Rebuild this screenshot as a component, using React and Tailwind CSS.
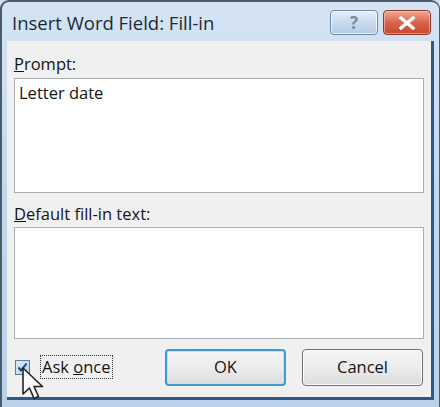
import React from "react";

const font = { fontFamily: '"Open Sans", "Noto Sans", sans-serif' };

function HelpButton() {
  return (
    <div className="flex h-[25px] w-[48px] items-center justify-center rounded-[4px] border border-[#6f8aa8] bg-gradient-to-b from-[#e3eef9] via-[#c8dbef] to-[#b3cce6] shadow-[inset_0_0_0_1px_rgba(255,255,255,0.7)]">
      <span className="text-[17px] font-bold leading-none text-[#7c8a99]">?</span>
    </div>
  );
}

function CloseButton() {
  return (
    <div className="flex h-[25px] w-[48px] items-center justify-center rounded-[4px] border border-[#8a3a2a] bg-gradient-to-b from-[#eeaa94] via-[#d8644a] to-[#c9452c] shadow-[inset_0_0_0_1px_rgba(255,220,210,0.5)]">
      <svg width="18" height="14" viewBox="0 0 18 14">
        <path d="M3 2 L15 12 M15 2 L3 12" stroke="#ffffff" strokeWidth="3.4" strokeLinecap="square" />
      </svg>
    </div>
  );
}

function Cursor() {
  return (
    <svg className="absolute left-[21px] top-[367px]" width="24" height="36" viewBox="0 0 24 36">
      <path
        d="M2 1 L2 27 L8.5 21 L13 31.5 L17.5 29.5 L13 19.5 L21.5 19.5 Z"
        fill="#ffffff"
        stroke="#222222"
        strokeWidth="1.6"
        strokeLinejoin="round"
      />
    </svg>
  );
}

export default function App() {
  return (
    <div className="relative h-[407px] w-[440px] overflow-hidden bg-[#cfdff0]" style={font}>
      <div className="flex h-full flex-col rounded-t-[9px] border-l-[2px] border-t-[2px] border-r border-[#4b5b6b] bg-gradient-to-b from-[#d4e4f4] via-[#c3d7ec] to-[#bad1e9] pl-[5px] pr-[5px]">
        {/* title bar */}
        <div className="flex h-[39px] shrink-0 items-center justify-between pl-[5px] pr-[3px]">
          <span className="pt-[4px] text-[18.5px] leading-none text-[#1e2a36]">Insert Word Field: Fill-in</span>
          <div className="flex gap-[5px] self-start pt-[8px]">
            <HelpButton />
            <CloseButton />
          </div>
        </div>

        {/* client area */}
        <div className="flex flex-col border-r-[3px] border-b-[3px] border-[#2f5a86] bg-[#f0f0f0] px-[7px] pt-[12px] text-[#141414]">
          <div className="h-[22px] text-[16.5px] leading-[22px]">
            <u>P</u>rompt:
          </div>
          <div className="mt-[3px] h-[115px] border border-[#a9acb1] bg-white px-[4px] pt-[3px] text-[16.5px] leading-[22px]">
            Letter date
          </div>
          <div className="mt-[10px] h-[22px] text-[16.5px] leading-[22px]">
            <u>D</u>efault fill-in text:
          </div>
          <div className="mt-[2px] h-[112px] border border-[#a9acb1] bg-white" />

          {/* bottom row */}
          <div className="flex h-[58px] items-center">
            <div className="flex items-center gap-[10px] pl-[1px] pb-[2px]">
              <div className="flex h-[15px] w-[15px] items-center justify-center border border-[#5b7c9e] bg-gradient-to-br from-[#d8ecfb] to-[#a9d3f3]">
                <svg width="11" height="11" viewBox="0 0 11 11">
                  <path d="M1.5 5.5 L4 8.5 L9.5 1.5" stroke="#1f3f63" strokeWidth="2" fill="none" />
                </svg>
              </div>
              <span className="border border-dotted border-[#333] px-[1px] text-[16.5px] leading-[22px]">
                Ask <u>o</u>nce
              </span>
            </div>
            <div className="ml-auto flex gap-[16px] pb-[1px]">
              <div className="flex h-[37px] w-[121px] items-center justify-center rounded-[4px] border-2 border-[#3d9ad5] bg-gradient-to-b from-[#f4f4f4] via-[#ececec] to-[#dcdcdc] text-[16.5px] shadow-[inset_0_0_0_1px_#bfe3f7]">
                OK
              </div>
              <div className="flex h-[37px] w-[121px] items-center justify-center rounded-[4px] border border-[#707070] bg-gradient-to-b from-[#f4f4f4] via-[#ececec] to-[#dcdcdc] text-[16.5px] shadow-[inset_0_0_0_1px_#fcfcfc]">
                Cancel
              </div>
            </div>
            <div className="w-[1px]" />
          </div>
        </div>
      </div>
      <Cursor />
    </div>
  );
}
